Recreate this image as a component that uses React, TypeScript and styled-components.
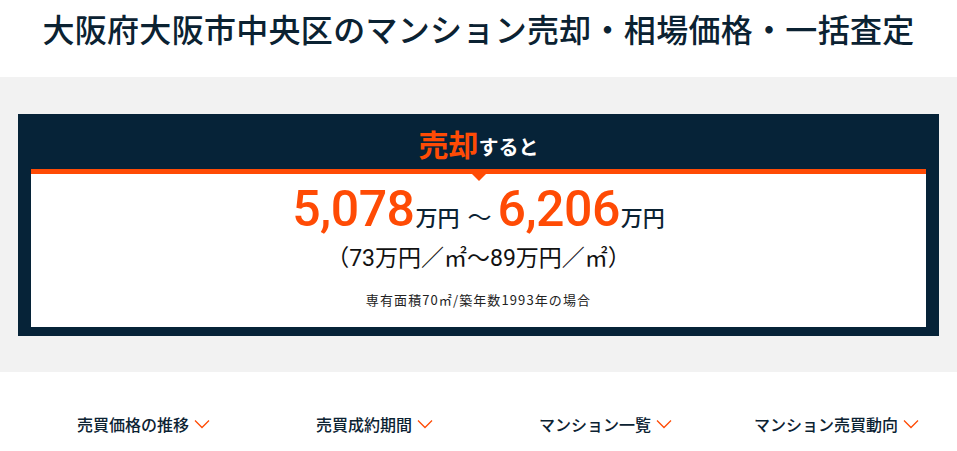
import React from "react";
import styled, { createGlobalStyle } from "styled-components";

const Global = createGlobalStyle`
  html, body { margin: 0; padding: 0; background: #fff; }
  body { font-family: Roboto, "Noto Sans CJK JP", sans-serif; color: #0a2233; }
`;

const NAVY = "#062338";
const ORANGE = "#ff4b05";

const Header = styled.header`
  height: 77px;
  display: flex;
  justify-content: center;
  align-items: flex-start;
  padding-top: 8px;
  box-sizing: border-box;
`;

const Title = styled.h1`
  margin: 0;
  font-family: "Noto Sans CJK JP", sans-serif;
  font-weight: 500;
  font-size: 32px;
  line-height: 40px;
  color: #0b2232;
  letter-spacing: 0.3px;
`;

const Band = styled.section`
  background: #f2f2f2;
  padding: 37px 18px 36px;
`;

const Box = styled.div`
  background: ${NAVY};
  padding: 0 13px 9px;
`;

const BoxHead = styled.div`
  height: 55px;
  display: flex;
  justify-content: center;
  align-items: center;
  font-family: "Noto Sans CJK JP", sans-serif;
  font-weight: 700;
  padding-top: 3px;
  box-sizing: border-box;
`;

const HeadAccent = styled.span`
  color: ${ORANGE};
  font-size: 30px;
`;

const HeadRest = styled.span`
  color: #fff;
  font-size: 20px;
  margin-top: 6px;
`;

const Inner = styled.div`
  position: relative;
  background: #fff;
  border-top: 5px solid ${ORANGE};
  height: 153px;
  display: flex;
  flex-direction: column;
  align-items: center;
  &::after {
    content: "";
    position: absolute;
    top: 0;
    left: 50%;
    transform: translateX(-50%);
    border-left: 7px solid transparent;
    border-right: 7px solid transparent;
    border-top: 7px solid ${ORANGE};
  }
`;

const PriceRow = styled.div`
  display: flex;
  align-items: baseline;
  margin-top: 6px;
  height: 58px;
`;

const Num = styled.span`
  font-family: Roboto, sans-serif;
  font-weight: 500;
  font-size: 50px;
  line-height: 58px;
  color: ${ORANGE};
  letter-spacing: -0.5px;
`;

const Unit = styled.span`
  font-family: "Noto Sans CJK JP", sans-serif;
  font-weight: 500;
  font-size: 22px;
  color: #0b2232;
  margin-left: 1px;
`;

const Tilde = styled.span`
  font-family: "Noto Sans CJK JP", sans-serif;
  font-size: 24px;
  color: #0b2232;
  margin: 0 6px 0 8px;
`;

const PerArea = styled.div`
  font-family: Roboto, "Noto Sans CJK JP", sans-serif;
  font-size: 23px;
  line-height: 32px;
  color: #111;
  margin-top: 5px;
`;

const Note = styled.div`
  font-family: "Noto Sans CJK JP", sans-serif;
  font-size: 13px;
  line-height: 16px;
  color: #222;
  letter-spacing: 1.1px;
  margin-top: 17px;
`;

const Nav = styled.nav`
  display: grid;
  grid-template-columns: repeat(4, 231px);
  padding: 40px 0 0 28px;
`;

const NavItem = styled.a`
  display: flex;
  justify-content: center;
  align-items: center;
  gap: 5px;
  font-family: "Noto Sans CJK JP", sans-serif;
  font-weight: 500;
  font-size: 16px;
  color: #0b2232;
  text-decoration: none;
`;

const Chev = () => (
  <svg width="16" height="10" viewBox="0 0 16 10">
    <path d="M1 1.5 L8 8.5 L15 1.5" fill="none" stroke={ORANGE} strokeWidth="1.3" />
  </svg>
);

export default function App() {
  const nav = ["売買価格の推移", "売買成約期間", "マンション一覧", "マンション売買動向"];
  return (
    <>
      <Global />
      <Header>
        <Title>大阪府大阪市中央区のマンション売却・相場価格・一括査定</Title>
      </Header>
      <Band>
        <Box>
          <BoxHead>
            <HeadAccent>売却</HeadAccent>
            <HeadRest>すると</HeadRest>
          </BoxHead>
          <Inner>
            <PriceRow>
              <Num>5,078</Num>
              <Unit>万円</Unit>
              <Tilde>～</Tilde>
              <Num>6,206</Num>
              <Unit>万円</Unit>
            </PriceRow>
            <PerArea>（73万円／㎡～89万円／㎡）</PerArea>
            <Note>専有面積70㎡/築年数1993年の場合</Note>
          </Inner>
        </Box>
      </Band>
      <Nav>
        {nav.map((n) => (
          <NavItem key={n}>
            {n}
            <Chev />
          </NavItem>
        ))}
      </Nav>
    </>
  );
}
